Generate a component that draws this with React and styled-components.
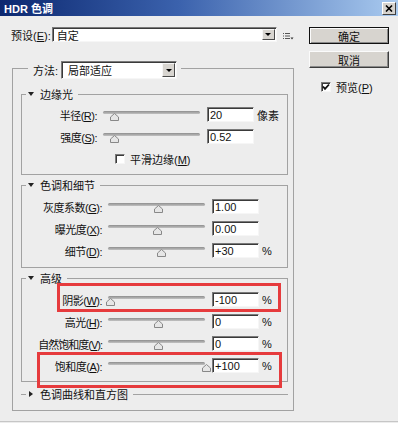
import React from "react";
import styled, { createGlobalStyle, css } from "styled-components";

const GlobalStyle = createGlobalStyle`
  html, body {
    margin: 0;
    padding: 0;
    background: #ececec;
  }
  body {
    font-family: "Liberation Sans", "Noto Sans CJK SC", sans-serif;
    font-size: 11px;
    color: #111;
  }
`;

const edgeRows = [
  { label: "半径", hot: "R", value: "20", unit: "像素", pos: 7 },
  { label: "强度", hot: "S", value: "0.52", pos: 7 },
];

const toneRows = [
  { label: "灰度系数", hot: "G", value: "1.00", pos: 46 },
  { label: "曝光度", hot: "X", value: "0.00", pos: 45 },
  { label: "细节", hot: "D", value: "+30", unit: "%", pos: 49 },
];

const advancedRows = [
  { label: "阴影", hot: "W", value: "-100", unit: "%", pos: -2, mark: { top: -9, bottom: -5, left: 35, right: 6 } },
  { label: "高光", hot: "H", value: "0", unit: "%", pos: 46 },
  { label: "自然饱和度", hot: "V", value: "0", unit: "%", pos: 46, tight: true },
  { label: "饱和度", hot: "A", value: "+100", unit: "%", pos: 94, mark: { top: -6, bottom: -15, left: 15, right: 5 } },
];

export default function App() {
  return (
    <Window>
      <GlobalStyle />
      <TitleBar>
        <span>HDR 色调</span>
        <CloseButton>
          <svg width="8" height="7" viewBox="0 0 8 7">
            <path d="M1 0.5 L7 6.5 M7 0.5 L1 6.5" stroke="#000" strokeWidth="1.6" />
          </svg>
        </CloseButton>
      </TitleBar>

      <Body>
        <Main>
          <PresetRow>
            <NoWrap>预设(<Key>E</Key>):</NoWrap>
            <Select $w={225} $h={15} $pad={4} $ml={1}>
              <SelectText>自定</SelectText>
              <DropButton />
            </Select>
            <MenuIcon width="11" height="8" viewBox="0 0 11 8">
              <path d="M0 1.5h1M2 1.5h5M0 4h1M2 4h5M0 6.5h1M2 6.5h5" stroke="#555" strokeWidth="1" />
              <path d="M7.5 5.5h3l-1.5 2z" fill="#333" />
            </MenuIcon>
          </PresetRow>

          <OuterLegend>
            <Rule $w={16} $top />
            <LegendLabel>方法:</LegendLabel>
            <Select $w={116} $h={18} $pad={6} $ml={3}>
              <SelectText>局部适应</SelectText>
              <DropButton />
            </Select>
            <Rule $ml={4} $top />
          </OuterLegend>

          <OuterBox>
            <SectionHeader $mt={0}>
              <Rule $w={5} />
              <Arrow $open />
              <SectionTitle>边缘光</SectionTitle>
              <Rule $ml={5} />
            </SectionHeader>
            <SectionBox $pt={13} $pb={10}>
              {edgeRows.map((r) => (
                <Param key={r.hot} row={r} labelWidth={75} />
              ))}
              <CheckRow>
                <CheckBox />
                <CheckText>平滑边缘(<Key>M</Key>)</CheckText>
              </CheckRow>
            </SectionBox>

            <SectionHeader $mt={4}>
              <Rule $w={5} />
              <Arrow $open />
              <SectionTitle>色调和细节</SectionTitle>
              <Rule $ml={5} />
            </SectionHeader>
            <SectionBox $pt={14} $pb={9}>
              {toneRows.map((r) => (
                <Param key={r.hot} row={r} labelWidth={80} />
              ))}
            </SectionBox>

            <SectionHeader $mt={4}>
              <Rule $w={5} />
              <Arrow $open />
              <SectionTitle>高级</SectionTitle>
              <Rule $ml={5} />
            </SectionHeader>
            <SectionBox $pt={14} $pb={8}>
              {advancedRows.map((r) => (
                <Param key={r.hot} row={r} labelWidth={80} />
              ))}
            </SectionBox>

            <SectionHeader $mt={6}>
              <Rule $w={5} />
              <Arrow />
              <SectionTitle $closed>色调曲线和直方图</SectionTitle>
              <Rule $ml={5} />
            </SectionHeader>
          </OuterBox>
        </Main>

        <Side>
          <Button $default>确定</Button>
          <Button>取消</Button>
          <PreviewRow>
            <CheckBox $checked>
              <svg width="8" height="8" viewBox="0 0 8 8">
                <path d="M1 3.5 L3 5.8 L7 1.5" stroke="#111" strokeWidth="1.8" fill="none" />
              </svg>
            </CheckBox>
            <CheckText>预览(<Key>P</Key>)</CheckText>
          </PreviewRow>
        </Side>
      </Body>
    </Window>
  );
}

function Param({ row, labelWidth }) {
  return (
    <ParamRow $mark={row.mark}>
      <ParamLabel $w={labelWidth} $tight={row.tight}>
        {row.label}(<Key>{row.hot}</Key>):
      </ParamLabel>
      <Slider>
        <Track />
        <Thumb style={{ left: row.pos }} width="9" height="8" viewBox="0 0 9 8">
          <path d="M4.5 0.5 L8.5 4 L8.5 7.5 L0.5 7.5 L0.5 4 Z" fill="#e6e6e6" stroke="#888" />
        </Thumb>
      </Slider>
      <Field>{row.value}</Field>
      {row.unit && <Unit>{row.unit}</Unit>}
    </ParamRow>
  );
}

const Window = styled.div`
  width: 398px;
  height: 422px;
  box-sizing: border-box;
  border-bottom: 1px solid #c6c6c6;
  background: #ededed;
  overflow: hidden;
`;

const TitleBar = styled.div`
  height: 16px;
  display: flex;
  align-items: center;
  justify-content: space-between;
  padding: 0 2px 0 4px;
  background: linear-gradient(to right, #0c2870 0%, #3b62ad 45%, #a9caef 100%);
  color: #fff;
  font-weight: bold;
  font-size: 11px;
`;

const CloseButton = styled.div`
  width: 14px;
  height: 13px;
  box-sizing: border-box;
  background: #d6d3ce;
  border: 1px solid;
  border-color: #fff #404040 #404040 #fff;
  display: flex;
  align-items: center;
  justify-content: center;
`;

const Body = styled.div`
  display: flex;
  padding: 11px 0 0 11px;
`;

const Main = styled.div`
  flex: none;
  width: 283px;
  display: flex;
  flex-direction: column;
`;

const Key = styled.span`
  text-decoration: underline;
`;

const NoWrap = styled.span`
  flex: none;
  white-space: nowrap;
`;

const PresetRow = styled.div`
  display: flex;
  align-items: center;
  height: 15px;
`;

const Select = styled.div`
  flex: none;
  width: ${(p) => p.$w}px;
  height: ${(p) => p.$h}px;
  margin-left: ${(p) => p.$ml}px;
  box-sizing: border-box;
  display: flex;
  align-items: stretch;
  padding: 1px 1px 1px ${(p) => p.$pad}px;
  background: #fff;
  border: 1px solid;
  border-color: #7a7a7a #f6f6f6 #f6f6f6 #7a7a7a;
  box-shadow: inset 1px 1px 0 #3a3a3a;
  white-space: nowrap;
`;

const SelectText = styled.span`
  flex: 1;
  display: flex;
  align-items: center;
`;

const DropButton = styled.div`
  width: 13px;
  box-sizing: border-box;
  background: #d8d5d0;
  border: 1px solid;
  border-color: #f6f6f6 #4a4a4a #4a4a4a #f6f6f6;
  display: flex;
  align-items: center;
  justify-content: center;

  &::before {
    content: "";
    border-left: 3px solid transparent;
    border-right: 3px solid transparent;
    border-top: 3px solid #000;
  }
`;

const MenuIcon = styled.svg`
  flex: none;
  margin-left: 6px;
  margin-top: 2px;
`;

const Rule = styled.div`
  height: 0;
  border-top: 1px solid #a2a2a2;
  flex: ${(p) => (p.$w ? "none" : 1)};
  width: ${(p) => (p.$w ? `${p.$w}px` : "auto")};
  margin-left: ${(p) => p.$ml || 0}px;
  ${(p) =>
    p.$top &&
    css`
      align-self: flex-start;
      margin-top: 7px;
    `}
`;

const OuterLegend = styled.div`
  display: flex;
  align-items: center;
  height: 18px;
  margin: 19px 0 0 1px;
`;

const LegendLabel = styled.span`
  margin-left: 5px;
  white-space: nowrap;
`;

const OuterBox = styled.div`
  margin: -11px 0 0 1px;
  border: 1px solid #a2a2a2;
  border-top: none;
  padding: 20px 5px 10px 8px;
  display: flex;
  flex-direction: column;
`;

const SectionHeader = styled.div`
  display: flex;
  align-items: center;
  height: 12px;
  margin-top: ${(p) => p.$mt}px;
`;

const Arrow = styled.span`
  width: 0;
  height: 0;
  ${(p) =>
    p.$open
      ? css`
          margin-left: 2px;
          border-left: 3px solid transparent;
          border-right: 3px solid transparent;
          border-top: 4px solid #222;
        `
      : css`
          margin-left: 3px;
          border-top: 3px solid transparent;
          border-bottom: 3px solid transparent;
          border-left: 4px solid #222;
        `}
`;

const SectionTitle = styled.span`
  margin-left: ${(p) => (p.$closed ? 7 : 6)}px;
  white-space: nowrap;
`;

const SectionBox = styled.div`
  margin-top: -6px;
  border: 1px solid #a2a2a2;
  border-top: none;
  padding: ${(p) => p.$pt}px 0 ${(p) => p.$pb}px;
  display: flex;
  flex-direction: column;
  gap: 7px;
`;

const ParamRow = styled.div`
  position: relative;
  display: flex;
  align-items: center;
  height: 15px;

  ${(p) =>
    p.$mark &&
    css`
      &::after {
        content: "";
        position: absolute;
        top: ${p.$mark.top}px;
        bottom: ${p.$mark.bottom}px;
        left: ${p.$mark.left}px;
        right: ${p.$mark.right}px;
        border: 3px solid #e63b3d;
        pointer-events: none;
      }
    `}
`;

const ParamLabel = styled.span`
  flex: none;
  width: ${(p) => p.$w}px;
  text-align: right;
  white-space: nowrap;
  letter-spacing: ${(p) => (p.$tight ? "-1px" : "-0.5px")};
`;

const Slider = styled.div`
  position: relative;
  flex: none;
  width: 97px;
  align-self: stretch;
  margin-left: 6px;
`;

const Track = styled.div`
  margin-top: 4px;
  height: 3px;
  border-radius: 2px;
  background: linear-gradient(#8e8e8e, #c2c2c2);
`;

const Thumb = styled.svg`
  position: absolute;
  top: 6px;
`;

const Field = styled.div`
  flex: none;
  width: 47px;
  height: 15px;
  margin-left: 7px;
  box-sizing: border-box;
  padding: 1px 0 0 2px;
  background: #fff;
  border: 1px solid;
  border-color: #7a7a7a #f6f6f6 #f6f6f6 #7a7a7a;
  box-shadow: inset 1px 1px 0 #3a3a3a;
  line-height: 12px;
`;

const Unit = styled.span`
  margin-left: 3px;
  white-space: nowrap;
`;

const CheckRow = styled.div`
  display: flex;
  align-items: center;
  height: 10px;
  margin: 3px 0 0 93px;
`;

const CheckBox = styled.div`
  flex: none;
  width: 10px;
  height: 10px;
  box-sizing: border-box;
  background: #fff;
  border: 1px solid;
  border-color: #7a7a7a #f6f6f6 #f6f6f6 #7a7a7a;
  box-shadow: inset 1px 1px 0 #3a3a3a;
  display: flex;
  align-items: center;
  justify-content: center;
`;

const CheckText = styled.span`
  margin-left: 5px;
  white-space: nowrap;
`;

const Side = styled.div`
  flex: none;
  width: 80px;
  margin-left: 15px;
  display: flex;
  flex-direction: column;
`;

const Button = styled.div`
  height: 17px;
  box-sizing: border-box;
  display: flex;
  align-items: center;
  justify-content: center;
  background: #d7d4cf;
  border: 1px solid;
  border-color: #fbfbfb #3c3c3c #3c3c3c #fbfbfb;
  box-shadow: inset -1px -1px 0 #8a8a8a;

  & + & {
    margin-top: 7px;
  }

  ${(p) =>
    p.$default &&
    css`
      border-color: #111;
      box-shadow: inset 1px 1px 0 #fbfbfb, inset -1px -1px 0 #8a8a8a;
    `}
`;

const PreviewRow = styled.div`
  display: flex;
  align-items: center;
  height: 10px;
  margin: 14px 0 0 12px;
`;
